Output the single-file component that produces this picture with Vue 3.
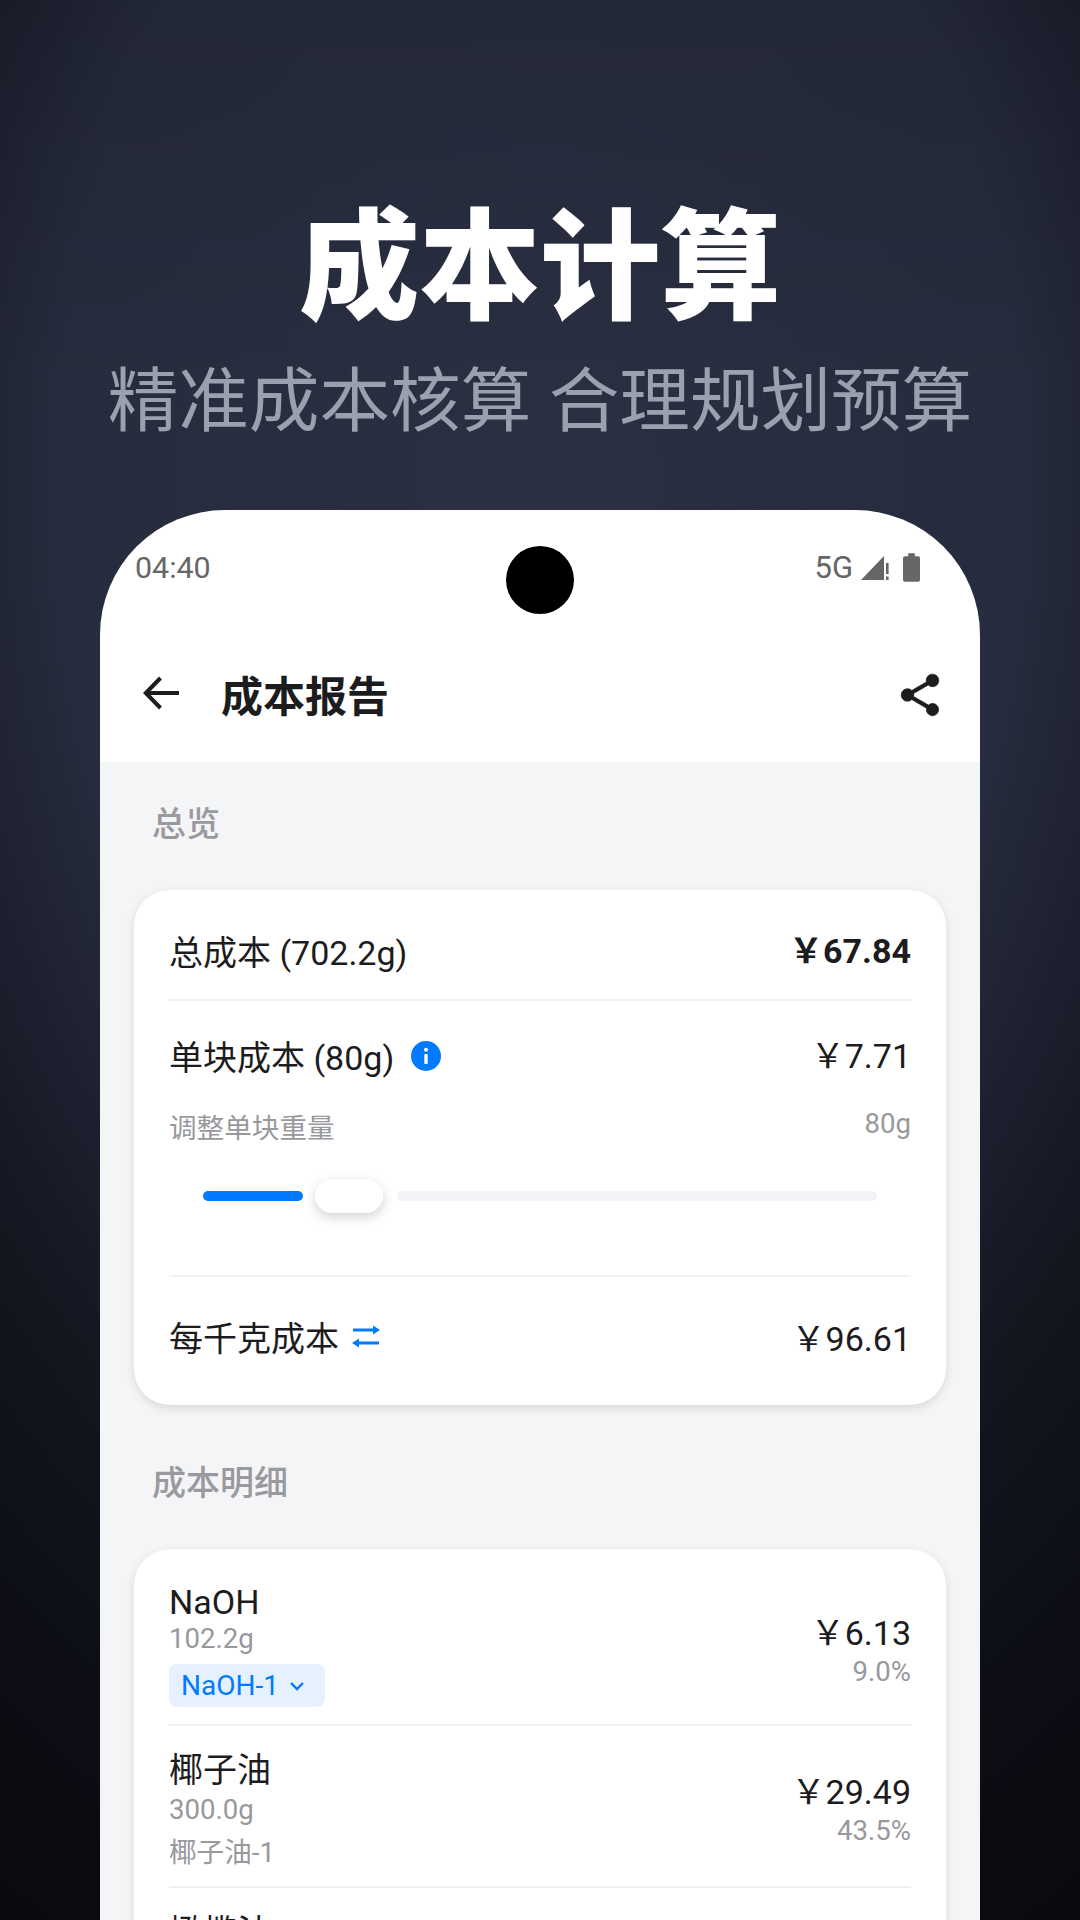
<template>
  <div class="page">
    <header class="hero">
      <h1 class="hero-title">成本计算</h1>
      <p class="hero-sub">精准成本核算 合理规划预算</p>
    </header>

    <section class="phone">
      <div class="camera"></div>

      <div class="status">
        <span class="time">04:40</span>
        <div class="status-right">
          <span class="net">5G</span>
          <svg class="signal" viewBox="0 0 28 26" width="28" height="26">
            <path d="M0 26 L23 2 V26 Z" fill="#666" />
            <rect x="25" y="9" width="2.600" height="11" fill="#666" />
            <rect x="25" y="22.500" width="2.600" height="3.500" fill="#666" />
          </svg>
          <svg class="battery" viewBox="0 0 18 30" width="17" height="29">
            <path d="M5.500 0h7v3H16a2 2 0 0 1 2 2v23a2 2 0 0 1-2 2H2a2 2 0 0 1-2-2V5a2 2 0 0 1 2-2h3.500z" fill="#666" />
          </svg>
        </div>
      </div>

      <div class="appbar">
        <div class="appbar-left">
          <svg viewBox="0 0 36 34" width="36" height="34" fill="none" stroke="#1c1c1e" stroke-width="4">
            <path d="M17.500 2 L2.800 17 L17.500 32 M3 17 H36" />
          </svg>
          <span class="appbar-title">成本报告</span>
        </div>
        <svg class="share" viewBox="0 0 24 24" width="50" height="50" fill="#1c1c1e" stroke="#1c1c1e" stroke-width="0.350">
          <path d="M18 16.08c-.76 0-1.44.3-1.96.77L8.910 12.700c.05-.23.09-.46.09-.7s-.04-.47-.09-.7l7.050-4.110c.54.5 1.250.81 2.040.81 1.660 0 3-1.340 3-3s-1.340-3-3-3-3 1.340-3 3c0 .24.04.47.09.7L8.040 9.810C7.500 9.310 6.790 9 6 9c-1.660 0-3 1.340-3 3s1.340 3 3 3c.79 0 1.500-.31 2.040-.81l7.120 4.160c-.05.21-.08.43-.08.65 0 1.610 1.310 2.920 2.920 2.920 1.610 0 2.920-1.310 2.920-2.920s-1.310-2.920-2.920-2.920z" />
        </svg>
      </div>

      <main class="content">
        <div class="section-label">总览</div>

        <div class="card overview">
          <div class="row total">
            <span>总成本 (702.2g)</span>
            <span class="price strong">&#xFFE5;67.84</span>
          </div>

          <div class="unit">
            <div class="row">
              <span class="with-icon">
                单块成本 (80g)
                <svg class="info" viewBox="0 0 30 30" width="30" height="30">
                  <circle cx="15" cy="15" r="15" fill="#007aff" />
                  <rect x="13.300" y="13" width="3.400" height="10" rx="0.800" fill="#fff" />
                  <circle cx="15" cy="8.800" r="2" fill="#fff" />
                </svg>
              </span>
              <span class="price">&#xFFE5;7.71</span>
            </div>
            <div class="adjust">
              <span class="muted adjust-label">调整单块重量</span>
              <span class="muted">80g</span>
            </div>
            <div class="slider">
              <div class="track active"></div>
              <div class="thumb"></div>
              <div class="track rest"></div>
            </div>
          </div>

          <div class="row perkg">
            <span class="with-icon">
              每千克成本
              <svg class="swap" viewBox="0 0 28 23" width="28" height="23" fill="#007aff">
                <path d="M1 3.400 H22 V6.600 H1 Z M21 0.500 L28 5 L21 9.500 Z" />
                <path d="M27 16.400 H6 V19.600 H27 Z M7 13.500 L0 18 L7 22.500 Z" />
              </svg>
            </span>
            <span class="price">&#xFFE5;96.61</span>
          </div>
        </div>

        <div class="section-label second">成本明细</div>

        <div class="card detail">
          <div v-for="item in items" :key="item.name" class="item" :class="{ 'has-tag': item.selectable }">
            <div class="item-left">
              <div class="item-name">{{ item.name }}</div>
              <div class="muted item-weight">{{ item.weight }}</div>
              <div v-if="item.selectable" class="tag">
                {{ item.brand }}
                <svg viewBox="0 0 16 10" width="16" height="10" fill="none" stroke="#007aff" stroke-width="2.400">
                  <path d="M2 2 L8 8 L14 2" />
                </svg>
              </div>
              <div v-else-if="item.brand" class="muted item-brand">{{ item.brand }}</div>
            </div>
            <div class="item-right">
              <div class="price">&#xFFE5;{{ item.cost }}</div>
              <div class="muted item-share">{{ item.share }}</div>
            </div>
          </div>
        </div>
      </main>
    </section>
  </div>
</template>

<script setup>
const items = [
  { name: "NaOH", weight: "102.2g", brand: "NaOH-1", selectable: true, cost: "6.13", share: "9.0%" },
  { name: "椰子油", weight: "300.0g", brand: "椰子油-1", cost: "29.49", share: "43.5%" },
  { name: "橄榄油", weight: "300.0g", brand: "橄榄油-1", cost: "32.22", share: "47.5%" },
];
</script>

<style>
html,
body {
  margin: 0;
  background: #0a0b10;
}
</style>

<style scoped>
.page {
  width: 1080px;
  height: 1920px;
  overflow: hidden;
  display: flex;
  flex-direction: column;
  align-items: center;
  font-family: Roboto, "Noto Sans CJK SC", sans-serif;
  background:
    linear-gradient(180deg, rgba(0, 0, 0, 0.1) 0, rgba(0, 0, 0, 0) 400px),
    radial-gradient(ellipse 900px 1400px at 50% 480px, #2a2f42 0%, #262b3d 54%, #202434 62%, #141620 80%, #0d0e15 100%, #0a0b10 116%);
}
.hero {
  padding-top: 194px;
  text-align: center;
}
.hero-title {
  margin: 0;
  font-size: 120.500px;
  line-height: 150px;
  font-weight: 900;
  color: #fff;
}
.hero-sub {
  margin: 8px 0 0;
  font-size: 70.600px;
  line-height: 100px;
  color: #9aa0ae;
  white-space: pre;
}
.phone {
  position: relative;
  width: 880px;
  margin-top: 58px;
  flex-shrink: 0;
  background: #fff;
  border-radius: 125px 125px 0 0;
  overflow: hidden;
}
.camera {
  position: absolute;
  left: 406px;
  top: 36px;
  width: 68px;
  height: 68px;
  border-radius: 50%;
  background: #000;
}
.status {
  height: 114px;
  padding: 0 60px 0 35px;
  display: flex;
  justify-content: space-between;
  align-items: center;
  color: #666;
  font-size: 30.400px;
}
.status-right {
  display: flex;
  align-items: center;
  gap: 8px;
}
.net {
  font-size: 31px;
}
.battery {
  margin-left: 6px;
}
.appbar {
  height: 138px;
  padding: 0 35px 0 43px;
  box-sizing: border-box;
  display: flex;
  justify-content: space-between;
  align-items: center;
}
.appbar-left {
  display: flex;
  align-items: center;
  gap: 42px;
}
.appbar-title {
  font-size: 42px;
  font-weight: 700;
  color: #1c1c1e;
}
.share {
  margin-top: 4px;
}
.content {
  background: #f4f5f7;
  padding: 0 34px;
  height: 1200px;
}
.section-label {
  padding: 42px 18px 0;
  height: 86px;
  font-size: 34px;
  line-height: 40px;
  font-weight: 500;
  color: #9a9a9e;
}
.section-label.second {
  height: 86px;
  padding-top: 58px;
}
.card {
  background: #fff;
  border-radius: 36px;
  padding: 0 35px;
  box-shadow: 0 3px 10px rgba(0, 0, 0, 0.12);
}
.card.detail {
  padding-top: 9px;
}
.row {
  display: flex;
  justify-content: space-between;
  align-items: center;
  font-size: 34px;
  color: #1c1c1e;
}
.total {
  height: 111px;
  padding-top: 12px;
  box-sizing: border-box;
  border-bottom: 2px solid #f0f0f3;
}
.price {
  font-size: 34px;
  line-height: 40px;
  color: #1c1c1e;
  text-align: right;
}
.price.strong {
  font-weight: 700;
}
.with-icon {
  display: flex;
  align-items: center;
  gap: 17px;
}
.unit {
  padding-top: 30px;
  height: 276px;
  box-sizing: border-box;
  border-bottom: 2px solid #f0f0f3;
}
.muted {
  color: #98989d;
  font-size: 27.600px;
}
.adjust {
  display: flex;
  justify-content: space-between;
  align-items: flex-start;
  margin-top: 27px;
}
.adjust-label {
  margin-top: -1px;
}
.slider {
  display: flex;
  align-items: center;
  padding: 0 34px;
  margin-top: 33px;
}
.track {
  height: 10px;
  border-radius: 5px;
}
.track.active {
  width: 100px;
  background: #007aff;
}
.track.rest {
  flex: 1;
  background: #f2f2f7;
}
.thumb {
  width: 68px;
  height: 34px;
  margin: 0 14px 0 12px;
  border-radius: 17px;
  background: #fff;
  box-shadow: 0 4px 12px rgba(0, 0, 0, 0.18);
}
.perkg {
  height: 128px;
  padding-bottom: 10px;
  box-sizing: border-box;
}
.perkg .swap {
  margin-left: -4px;
}
.perkg .price {
  margin-top: 5px;
}
.item {
  display: flex;
  justify-content: space-between;
  align-items: center;
  padding: 22px 0 14px;
  border-bottom: 2px solid #f0f0f3;
}
.item-name {
  font-size: 34px;
  line-height: 44px;
  color: #1c1c1e;
}
.item-weight {
  line-height: 36px;
}
.has-tag .item-weight {
  margin-top: -3px;
}
.has-tag .item-right {
  margin-top: 11px;
}
.item-right {
  margin-bottom: 1px;
}
.item-brand {
  line-height: 44px;
  margin: 3px 0 -3px;
}
.tag {
  display: inline-flex;
  align-items: center;
  gap: 10px;
  height: 43px;
  margin: 7px 0 3px;
  padding: 0 20px 0 12px;
  border-radius: 8px;
  background: #e5f1ff;
  color: #007aff;
  font-size: 28px;
}
.item-share {
  text-align: right;
  margin-top: 2px;
}
</style>
